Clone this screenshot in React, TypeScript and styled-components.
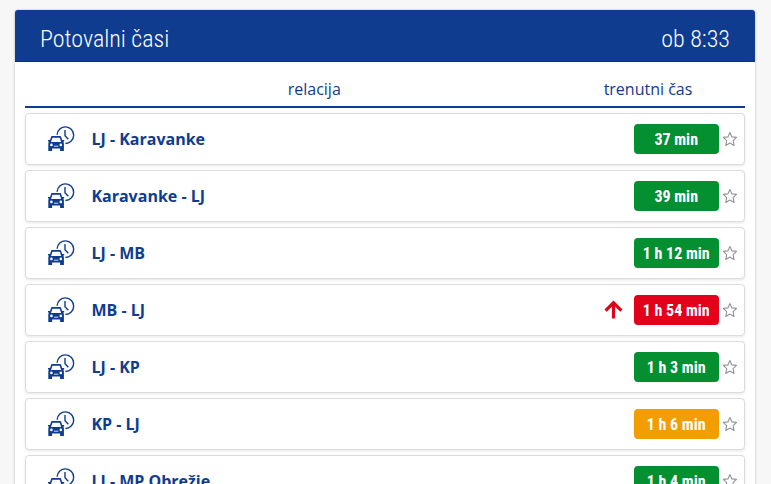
import React from "react";
import styled, { createGlobalStyle } from "styled-components";

const GlobalStyle = createGlobalStyle`
  * { box-sizing: border-box; }
  html, body { margin: 0; height: 484px; overflow: hidden; }
  body { background: #f7f7f7; font-family: "Open Sans", "Noto Sans", sans-serif; color: #0f3c8f; }
`;

const blue = "#0f3c8f";
const levels = { normal: "#048f31", slow: "#f29e00", heavy: "#e2001a" };
type Level = keyof typeof levels;

const Page = styled.main`
  height: 484px;
  padding: 9px 14px 0;
  overflow: hidden;
`;

const Panel = styled.section`
  width: 742px;
  height: 620px;
  background: #fff;
  border: 1px solid #dfdfdf;
  border-radius: 4px;
  box-shadow: 0 1px 3px rgba(0, 0, 0, 0.08);
`;

const PanelHeader = styled.header`
  display: flex;
  justify-content: space-between;
  align-items: center;
  height: 52px;
  padding: 6px 25px 0;
  background: ${blue};
  border-bottom: 1px solid #0d337a;
  border-radius: 3px 3px 0 0;
  color: #fff;
  font: 300 24px/32px "Roboto Condensed", Roboto, sans-serif;
  font-stretch: 75%;
`;

const ColumnHeads = styled.div`
  display: grid;
  grid-template-columns: 578.5px 89px 52.5px;
  height: 46px;
  margin: 0 10px;
  padding-top: 15px;
  border-bottom: 2px solid ${blue};
  font-size: 16px;
  line-height: 24px;
  text-align: center;
  white-space: nowrap;
`;

const RouteList = styled.ul`
  display: flex;
  flex-direction: column;
  gap: 5px;
  list-style: none;
  margin: 5px 10px 0;
  padding: 0;
`;

const RouteRow = styled.li`
  display: flex;
  align-items: center;
  height: 52px;
  padding: 0 6px 0 22px;
  background: #fff;
  border: 1px solid #dcdcdc;
  border-radius: 4px;
  box-shadow: 0 1px 3px rgba(0, 0, 0, 0.1);
`;

const RouteName = styled.span`
  flex: 1;
  margin-left: 16.4px;
  font-size: 16px;
  font-weight: 700;
  line-height: 24px;
`;

const TimeBadge = styled.span<{ $level: Level }>`
  width: 85px;
  height: 30px;
  margin-left: 10px;
  padding-right: 0.6px;
  border-radius: 4px;
  background: ${(p) => levels[p.$level]};
  color: #fff;
  font: 700 16px/31px "Roboto Condensed", Roboto, sans-serif;
  font-stretch: 75%;
  text-align: center;
  white-space: nowrap;
`;

const StarButton = styled.button`
  display: flex;
  width: 16px;
  height: 16px;
  margin-left: 3px;
  padding: 0;
  border: 0;
  background: none;
`;

const CarClockIcon = () => (
  <svg width="27" height="26" viewBox="0 0 27 26" fill="none" stroke={blue} strokeWidth="1.4">
    <path d="M9.1 8.7A8.3 8.3 0 1 1 17.4 17.5" />
    <path d="M17 3.9V9.7L20.3 13.2" />
    <path strokeWidth="1.6" strokeLinejoin="round" d="M2 16.6 3.9 10.9H12.3L14.2 16.6" />
    <path
      fill={blue}
      stroke="none"
      d="M0 14.1H2.2L2.6 16H13.6L14 14.1H16.2V15.2L15.2 15.8Q15.9 16.5 15.9 17.5V24.9H12.1V22.4H4.1V24.9H.3V17.5Q.3 16.5 1 15.8L0 15.2Z"
    />
    <circle cx="3.4" cy="18.9" r="1.3" fill="#fff" stroke="none" />
    <circle cx="12.8" cy="18.9" r="1.3" fill="#fff" stroke="none" />
    <path stroke="#fff" strokeWidth=".8" d="M5.9 20.2H10.3" />
  </svg>
);

const StarIcon = () => (
  <svg width="16" height="16" viewBox="0 0 16 16" fill="none" stroke="#92929b" strokeWidth="1.1" strokeLinejoin="round">
    <path d="M7.9 1.6 9.9 5.9 14.5 6.4 11.1 9.7 12 14.4 7.9 12.1 3.8 14.4 4.7 9.7 1.3 6.4 5.9 5.9Z" />
  </svg>
);

const RisingIcon = () => (
  <svg width="20" height="20" viewBox="0 0 20 20" fill="none" stroke={levels.heavy} strokeWidth="3.2">
    <path d="M9.5 18.6V3M1.6 10.7 9.5 2.8 17.4 10.7" />
  </svg>
);

const routes: { name: string; time: string; level: Level; rising?: boolean }[] = [
  { name: "LJ - Karavanke", time: "37 min", level: "normal" },
  { name: "Karavanke - LJ", time: "39 min", level: "normal" },
  { name: "LJ - MB", time: "1 h 12 min", level: "normal" },
  { name: "MB - LJ", time: "1 h 54 min", level: "heavy", rising: true },
  { name: "LJ - KP", time: "1 h 3 min", level: "normal" },
  { name: "KP - LJ", time: "1 h 6 min", level: "slow" },
  { name: "LJ - MP Obrežje", time: "1 h 4 min", level: "normal" },
];

export default function App() {
  return (
    <Page>
      <GlobalStyle />
      <Panel>
        <PanelHeader>
          <span>Potovalni časi</span>
          <span>ob 8:33</span>
        </PanelHeader>
        <ColumnHeads>
          <span>relacija</span>
          <span>trenutni čas</span>
        </ColumnHeads>
        <RouteList>
          {routes.map((route) => (
            <RouteRow key={route.name}>
              <CarClockIcon />
              <RouteName>{route.name}</RouteName>
              {route.rising && <RisingIcon />}
              <TimeBadge $level={route.level}>{route.time}</TimeBadge>
              <StarButton aria-label="Priljubljeno">
                <StarIcon />
              </StarButton>
            </RouteRow>
          ))}
        </RouteList>
      </Panel>
    </Page>
  );
}
